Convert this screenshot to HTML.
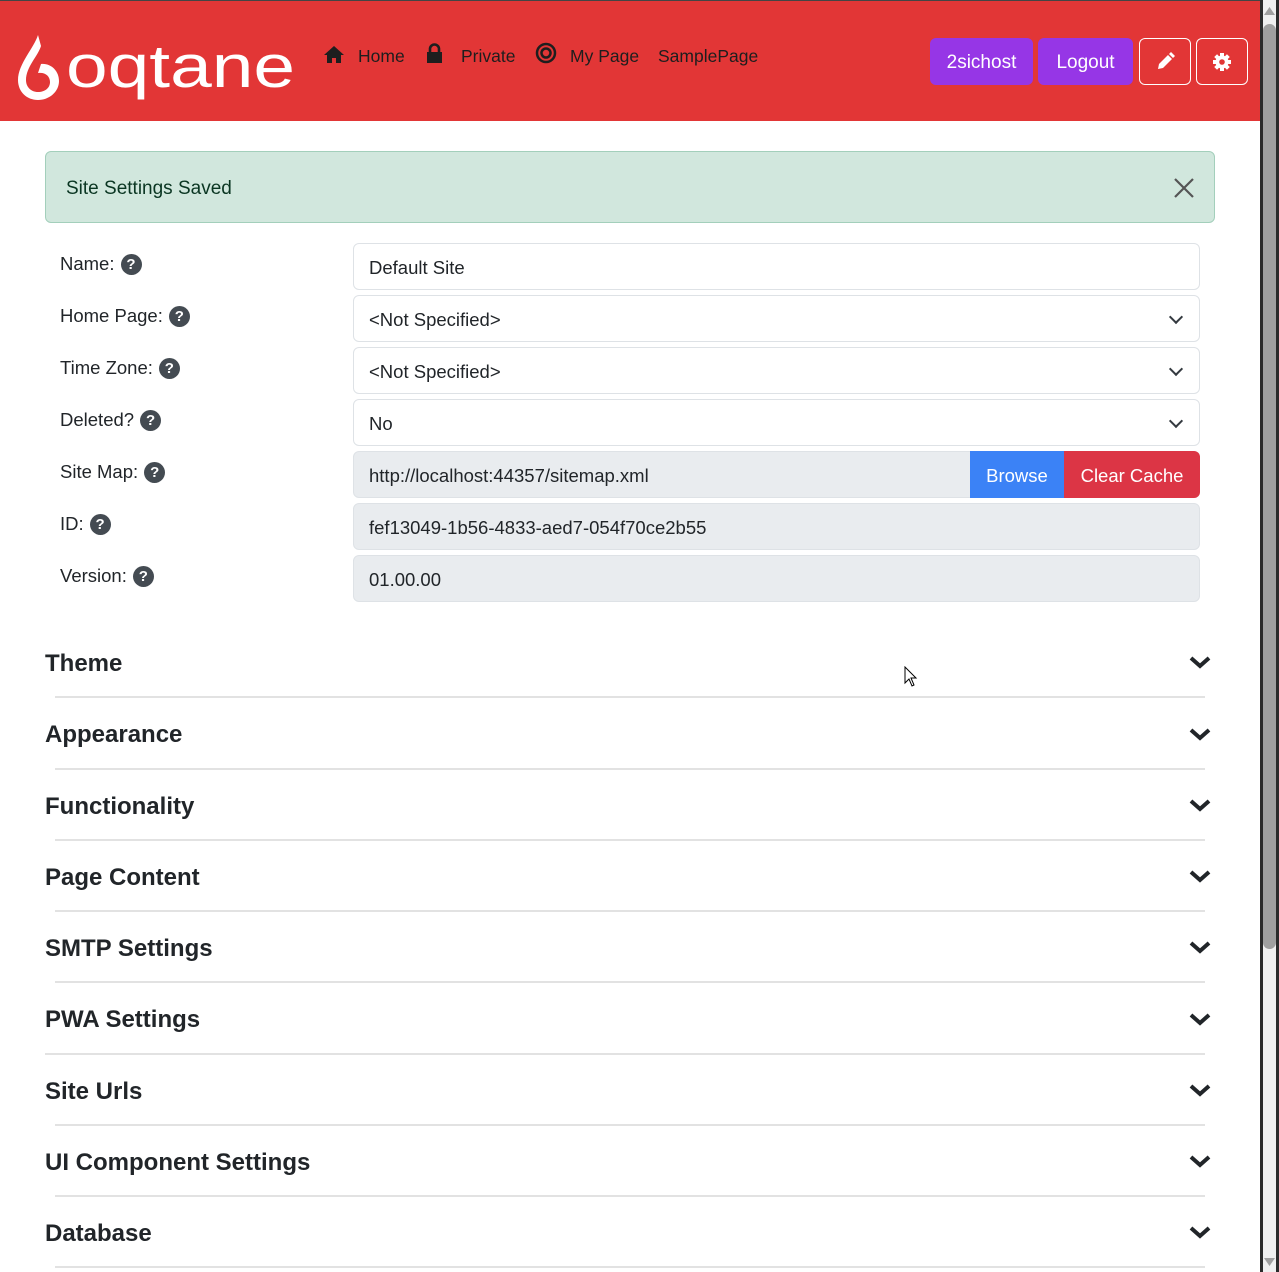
<!DOCTYPE html>
<html><head><meta charset="utf-8"><style>
*{box-sizing:border-box;margin:0;padding:0}
body{width:1279px;height:1272px;overflow:hidden;background:#fff;font-family:"Liberation Sans",sans-serif;color:#212529;position:relative}
.abs{position:absolute}
.hdr{left:0;top:0;width:1260px;height:121px;background:#e23636;border-top:1px solid #444}
.nav{top:46px;font-size:17.5px;color:#1e1e1e}
.btn{top:38px;height:47px;border-radius:6px;font-size:19px;color:#fff;display:flex;align-items:center;justify-content:center;padding-top:3px}
.pur{background:#9636e6}
.out{border:1px solid #fff}
.alert{left:45px;top:151px;width:1170px;height:72px;background:#d1e7dd;border:1px solid #a3cfbb;border-radius:6px;color:#0a3622;font-size:19px;padding:26px 20px}
.lbl{left:60px;font-size:18.5px;color:#212529;display:flex;align-items:center}
.q{display:inline-block;width:21px;height:21px;border-radius:50%;background:#444b52;color:#fff;font-weight:bold;font-size:15px;text-align:center;line-height:21px;margin-left:6px}
.inp{left:353px;width:847px;height:47px;border:1px solid #dee2e6;border-radius:6px;font-size:18.5px;padding:3px 15px 0;display:flex;align-items:center}
.ro{background:#e9ecef}
.chev{position:absolute;right:18px;top:16px;width:10px;height:10px;border-right:2px solid #343a40;border-bottom:2px solid #343a40;transform:rotate(45deg)}
.sec{left:45px;font-size:24px;font-weight:bold;color:#212529}
.hr{left:55px;width:1150px;height:2px;background:#e2e2e2}
.sb{left:1260px;top:0;width:19px;height:1272px;background:#f0f0f0;border-left:3px solid #2b2b2b;border-right:3px solid #2b2b2b}
</style></head><body>
<div class="abs hdr"></div>
<svg class="abs" style="left:14px;top:34px" width="285" height="68" viewBox="0 0 285 68">
<path d="M24 1 C20 14 4 30 4 46 C4 58 13 66 24 66 C35 66 45 58 45 47 C45 37 37 29 27 30 L24 39 C31 38 36 42 36 48 C36 54 31 58 24 58 C17 58 12 53 12 46 C12 33 24 22 27 12 Z" fill="#fff"/>
<text x="52" y="53" font-family="Liberation Sans,sans-serif" font-size="60" fill="#fff" textLength="229" lengthAdjust="spacingAndGlyphs">oqtane</text>
</svg>
<svg class="abs" style="left:323px;top:45px" width="22" height="19" viewBox="0 0 22 19"><path d="M11 1 L21 10 L18 10 L18 18 L13 18 L13 13 L9 13 L9 18 L4 18 L4 10 L1 10Z" fill="#1e1e1e"/></svg>
<div class="abs nav" style="left:358px">Home</div>
<svg class="abs" style="left:426px;top:43px" width="17" height="21" viewBox="0 0 17 21"><path d="M4 9 V6 a4.5 4.5 0 0 1 9 0 V9" stroke="#1e1e1e" stroke-width="2.6" fill="none"/><rect x="1" y="9" width="15" height="11" fill="#1e1e1e"/></svg>
<div class="abs nav" style="left:461px">Private</div>
<svg class="abs" style="left:535px;top:42px" width="22" height="22" viewBox="0 0 22 22"><circle cx="11" cy="11" r="9" stroke="#1e1e1e" stroke-width="2.5" fill="none"/><circle cx="11" cy="11" r="4.5" stroke="#1e1e1e" stroke-width="2.5" fill="none"/></svg>
<div class="abs nav" style="left:570px">My Page</div>
<div class="abs nav" style="left:658px">SamplePage</div>
<div class="abs btn pur" style="left:930px;width:103px">2sichost</div>
<div class="abs btn pur" style="left:1038px;width:95px">Logout</div>
<div class="abs btn out" style="left:1139px;width:52px;padding:0"><svg width="20" height="20" viewBox="0 0 20 20"><path d="M3 17 L4 12 L13 3 L17 7 L8 16Z M14 2 L16 0 L20 4 L18 6Z" fill="#fff"/></svg></div>
<div class="abs btn out" style="left:1196px;width:52px;padding:0"><svg width="20" height="20" viewBox="0 0 20 20"><g fill="#fff"><circle cx="10" cy="10" r="6.5"/><rect x="8" y="1" width="4" height="18"/><rect x="1" y="8" width="18" height="4"/><rect x="8" y="1" width="4" height="18" transform="rotate(45 10 10)"/><rect x="8" y="1" width="4" height="18" transform="rotate(-45 10 10)"/></g><circle cx="10" cy="10" r="2.8" fill="#e23636"/></svg></div>

<div class="abs alert">Site Settings Saved</div>
<svg class="abs" style="left:1173px;top:177px" width="22" height="22" viewBox="0 0 22 22"><path d="M2 2 L20 20 M20 2 L2 20" stroke="#555" stroke-width="2.2"/></svg>

<div class="abs lbl" style="top:253px">Name:<span class="q">?</span></div>
<div class="abs inp" style="top:243px">Default Site</div>
<div class="abs lbl" style="top:305px">Home Page:<span class="q">?</span></div>
<div class="abs inp" style="top:295px">&lt;Not Specified&gt;<span class="chev"></span></div>
<div class="abs lbl" style="top:357px">Time Zone:<span class="q">?</span></div>
<div class="abs inp" style="top:347px">&lt;Not Specified&gt;<span class="chev"></span></div>
<div class="abs lbl" style="top:409px">Deleted?<span class="q">?</span></div>
<div class="abs inp" style="top:399px">No<span class="chev"></span></div>
<div class="abs lbl" style="top:461px">Site Map:<span class="q">?</span></div>
<div class="abs inp ro" style="top:451px">http://localhost:44357/sitemap.xml</div>
<div class="abs" style="left:970px;top:451px;width:94px;height:47px;background:#3b82f6;color:#fff;font-size:18.5px;display:flex;align-items:center;justify-content:center;padding-top:3px">Browse</div>
<div class="abs" style="left:1064px;top:451px;width:136px;height:47px;background:#dc3545;color:#fff;font-size:18.5px;display:flex;align-items:center;justify-content:center;border-radius:0 6px 6px 0;padding-top:3px">Clear Cache</div>
<div class="abs lbl" style="top:513px">ID:<span class="q">?</span></div>
<div class="abs inp ro" style="top:503px">fef13049-1b56-4833-aed7-054f70ce2b55</div>
<div class="abs lbl" style="top:565px">Version:<span class="q">?</span></div>
<div class="abs inp ro" style="top:555px">01.00.00</div>

<div class="abs sec" style="top:650px">Theme</div><div class="abs hr" style="top:696px"></div>
<div class="abs sec" style="top:721px">Appearance</div><div class="abs hr" style="top:768px"></div>
<div class="abs sec" style="top:793px">Functionality</div><div class="abs hr" style="top:839px"></div>
<div class="abs sec" style="top:864px">Page Content</div><div class="abs hr" style="top:910px"></div>
<div class="abs sec" style="top:935px">SMTP Settings</div><div class="abs hr" style="top:981px"></div>
<div class="abs sec" style="top:1006px">PWA Settings</div><div class="abs hr" style="top:1053px;left:45px;width:1160px"></div>
<div class="abs sec" style="top:1078px">Site Urls</div><div class="abs hr" style="top:1124px"></div>
<div class="abs sec" style="top:1149px">UI Component Settings</div><div class="abs hr" style="top:1195px"></div>
<div class="abs sec" style="top:1220px">Database</div><div class="abs hr" style="top:1266px"></div>

<svg class="abs" style="left:1189px;top:650px" width="22" height="600" viewBox="0 0 22 600">
<g fill="none" stroke="#212529" stroke-width="4">
<path d="M2 8 L11 16 L20 8"/><path d="M2 80 L11 88 L20 80"/><path d="M2 151 L11 159 L20 151"/><path d="M2 222 L11 230 L20 222"/><path d="M2 293 L11 301 L20 293"/><path d="M2 365 L11 373 L20 365"/><path d="M2 436 L11 444 L20 436"/><path d="M2 507 L11 515 L20 507"/><path d="M2 578 L11 586 L20 578"/>
</g></svg>

<svg class="abs" style="left:904px;top:666px" width="14" height="22" viewBox="0 0 14 22"><path d="M1 1 L1 17 L5 13 L8 20 L10 19 L7 12 L12 12Z" fill="#fff" stroke="#000" stroke-width="1"/></svg>

<div class="abs sb"></div>
<div class="abs" style="left:1263px;top:24px;width:13px;height:925px;background:#a0a0a0;border-radius:7px"></div>
<svg class="abs" style="left:1263px;top:5px" width="13" height="12"><path d="M1 10 L6.5 2 L12 10Z" fill="#a0a0a0"/></svg>
<svg class="abs" style="left:1263px;top:1256px" width="13" height="12"><path d="M1 2 L6.5 10 L12 2Z" fill="#a0a0a0"/></svg>
</body></html>
